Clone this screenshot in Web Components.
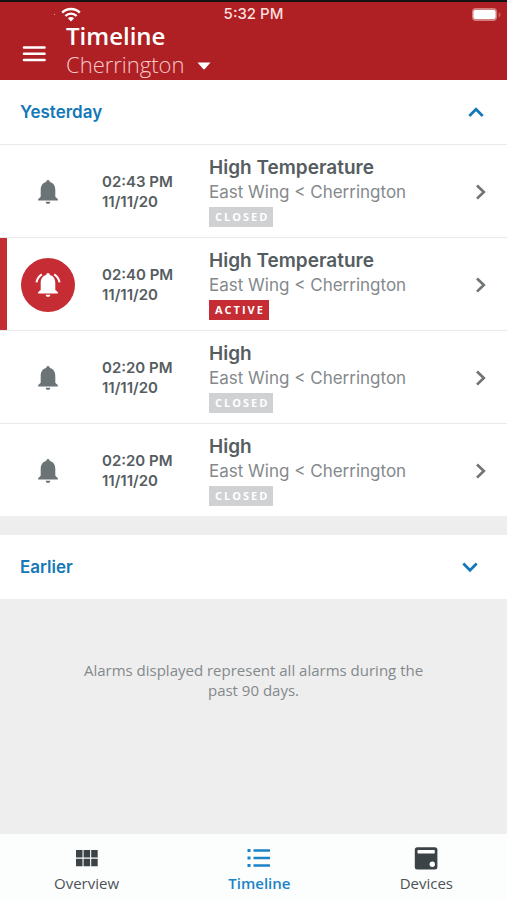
<!DOCTYPE html>
<html lang="en">
<head>
<meta charset="utf-8">
<meta name="viewport" content="width=device-width, initial-scale=1">
<title>Timeline</title>
<style>
  html, body { margin: 0; }
  body {
    --red: #af2024;
    --alert: #c52c33;
    --blue: #1478b8;
    --ink: #555d61;
    --muted: #84898c;
    --line: #e9eaeb;
    --ui: Inter, "Liberation Sans", sans-serif;
    --brand: "Open Sans", "Noto Sans", sans-serif;
    font-family: var(--ui);
    color: var(--ink);
    background: #eee;
  }
</style>
</head>
<body>
<timeline-app></timeline-app>

<script>
const define = (name, html, setup) => {
  const template = document.createElement('template');
  template.innerHTML = html;
  customElements.define(name, class extends HTMLElement {
    connectedCallback() {
      if (this.shadowRoot) return;
      this.attachShadow({ mode: 'open' }).append(template.content.cloneNode(true));
      if (setup) setup(this, this.shadowRoot);
    }
  });
};

const icons = {
  wifi: [20, 15, '<g fill="none" stroke="#fff" stroke-width="2.4"><path d="M1.2 5.6a12.4 12.4 0 0 1 17.6 0"/><path d="M4.4 9a7.9 7.9 0 0 1 11.2 0"/></g><path fill="#fff" d="M6.9 11.2a4.4 4.4 0 0 1 6.2 0L10 14.4z"/>'],
  battery: [30, 15, '<rect x="1" y="1" width="25" height="13" rx="4" fill="#d67f80"/><rect x="2.5" y="3" width="22" height="9" rx="2" fill="#fff"/><path fill="#c9595c" d="M27.500 5.200v5q2.200-.8 2.200-2.500t-2.200-2.500z"/>'],
  menu: [24, 18, '<path stroke="#fff" stroke-width="2.600" stroke-linecap="round" d="M2 2.500h20.500M2 8.700h20.500M2 15h20.500"/>'],
  caret: [14, 8, '<path fill="#fff" d="M.5.500h13L7.800 7q-.8.800-1.600 0z"/>'],
  up: [16, 16, '<path fill="none" stroke="currentColor" stroke-width="2.700" d="M1.300 12 8 5.200l6.700 6.800"/>'],
  down: [16, 16, '<path fill="none" stroke="currentColor" stroke-width="2.700" d="M1.300 4.500 8 11.300l6.700-6.800"/>'],
  right: [12, 18, '<path fill="none" stroke="#717578" stroke-width="2.700" d="M2 2.500 8.800 9 2 15.600"/>'],
  bell: [28, 28, '<path fill="#6b7377" d="M14 2q1.700 0 1.900 1.900C20 5 21.300 8.500 21.300 12v6.700l2.600 2.600v1.300H4.100v-1.300l2.600-2.600V12c0-3.500 1.300-7 5.400-8.100Q12.300 2 14 2zM11.600 23.800h4.800Q16 26 14 26t-2.400-2.200z"/>'],
  ring: [28, 28, '<path fill="#fff" d="M14 2q1.700 0 1.900 1.900C20 5 21.300 8.500 21.300 12v6.700l2.600 2.600v1.300H4.100v-1.300l2.600-2.600V12c0-3.500 1.300-7 5.400-8.100Q12.300 2 14 2zM11.600 23.800h4.800Q16 26 14 26t-2.400-2.200z"/><g fill="none" stroke="#fff" stroke-width="2"><path d="M7.800 3.300Q3.200 6.200 2.600 11.300M20.200 3.300q4.600 2.900 5.200 8"/></g>'],
  grid: [24, 24, '<path fill="#3b4347" d="M1 4h6.500v7.500H1zM8.600 4h6.500v7.500H8.600zM16.200 4h6.500v7.500h-6.500zM1 12.700h6.500v7.500H1zM8.600 12.700h6.500v7.500H8.600zM16.200 12.700h6.500v7.500h-6.500z"/>'],
  list: [24, 24, '<path fill="currentColor" d="M.5 3h3v3h-3zM6.500 3.200H23v2.500H6.500zM.5 10.500h3v3h-3zM6.500 10.800H23v2.500H6.500zM.5 18h3v3h-3zM6.500 18.300H23v2.500H6.500z"/>'],
  device: [24, 24, '<rect x=".8" y="1.300" width="22.600" height="22.200" rx="2.500" fill="#3b4347"/><rect x="3.500" y="4" width="17.300" height="3.500" rx=".7" fill="#fff"/><circle cx="18.300" cy="18.200" r="2.700" fill="#fff"/>']
};

define('app-icon', `
  <style>:host { display: block; flex: none; line-height: 0; } svg { display: block; }</style>
`, (host, root) => {
  const [w, h, shapes] = icons[host.getAttribute('name')];
  root.innerHTML += `<svg width="${w}" height="${h}" viewBox="0 0 ${w} ${h}" aria-hidden="true">${shapes}</svg>`;
});

define('status-bar', `
  <style>
    :host { display: grid; grid-template-columns: 1fr auto 1fr; align-items: center; height: 24px;
      padding: 2px 6px 0 6px; border-top: 2px solid #151213; box-sizing: border-box; color: #fbdedd; }
    .left { display: flex; align-items: center; gap: 6px; padding-left: 48px; }
    .dot { width: 1px; height: 1px; background: #e9a5a5; }
    time { font: 500 15px/20px var(--ui); }
    app-icon.battery { justify-self: end; }
  </style>
  <span class="left"><span class="dot"></span><app-icon name="wifi"></app-icon></span>
  <time>5:32 PM</time>
  <app-icon class="battery" name="battery"></app-icon>
`);

define('app-header', `
  <style>
    :host { display: block; background: var(--red); color: #fff; }
    .bar { display: flex; align-items: center; gap: 20px; padding: 0 22px 4px; height: 56px; box-sizing: border-box; }
    button { border: 0; padding: 0; background: none; color: inherit; cursor: pointer; }
    .menu { margin-top: 8px; }
    h1 { margin: 0; font: 600 24px/28px var(--brand); }
    .site { display: flex; align-items: center; gap: 12px; font: 300 22px/28px var(--brand); color: #f6c9c6; }
    .site app-icon { padding-top: 4px; }
  </style>
  <status-bar></status-bar>
  <div class="bar">
    <button class="menu" aria-label="Menu"><app-icon name="menu"></app-icon></button>
    <div>
      <h1><slot name="title"></slot></h1>
      <button class="site"><slot name="site"></slot><app-icon name="caret"></app-icon></button>
    </div>
  </div>
`);

define('alarm-section', `
  <style>
    :host { display: block; background: #fff; }
    h2 { margin: 0; }
    button { display: flex; justify-content: space-between; align-items: center; width: 100%; height: 64px;
      border: 0; padding: 0 23px 0 20px; background: none; color: var(--blue); font: 600 17px/24px var(--ui); cursor: pointer; }
    :host(:not([open])) button { padding-right: 29px; }
    :host(:not([open])) .rows { display: none; }
  </style>
  <h2><button><span class="label"></span></button></h2>
  <div class="rows"><slot></slot></div>
`, (host, root) => {
  const open = host.hasAttribute('open');
  const button = root.querySelector('button');
  root.querySelector('.label').textContent = host.getAttribute('label');
  button.setAttribute('aria-expanded', open);
  const icon = document.createElement('app-icon');
  icon.setAttribute('name', open ? 'up' : 'down');
  button.append(icon);
});

define('alarm-row', `
  <style>
    :host { display: grid; grid-template-columns: 95px 107px 1fr auto; align-items: center; height: 93px;
      box-sizing: border-box; border-top: 1px solid var(--line); padding: 1px 20px 0 0; }
    :host([active]) { background: linear-gradient(var(--alert), var(--alert)) left / 7px 100% no-repeat; }
    .mark { display: grid; place-items: center; width: 54px; height: 54px; border-radius: 50%; justify-self: center; }
    :host([active]) .mark { background: var(--alert); }
    .when { padding-left: 7px; font: 600 15px/20px var(--ui); }
    .what { padding-left: 7px; }
    h3 { margin: 0; font: 600 19px/24px var(--ui); }
    p { margin: 0; font: 400 17px/24px var(--ui); color: var(--muted); }
    .badge { display: block; width: max-content; margin-top: 3px; padding: 0 4px 0 6px; background: #cfd1d3; color: #fff;
      font: 700 11px/20px var(--brand); letter-spacing: 2px; }
    :host([active]) .badge { background: var(--alert); }
    button { border: 0; padding: 0; background: none; cursor: pointer; }
  </style>
  <span class="mark"></span>
  <time class="when"><slot name="time"></slot><br><slot name="date"></slot></time>
  <div class="what">
    <h3><slot name="title"></slot></h3>
    <p><slot name="place"></slot></p>
    <span class="badge"><slot name="state"></slot></span>
  </div>
  <button aria-label="Open alarm"><app-icon name="right"></app-icon></button>
`, (host, root) => {
  const icon = document.createElement('app-icon');
  icon.setAttribute('name', host.hasAttribute('active') ? 'ring' : 'bell');
  root.querySelector('.mark').append(icon);
});

define('tab-item', `
  <style>
    :host { display: block; }
    a { display: flex; flex-direction: column; align-items: center; gap: 2px; color: #4c5356; text-decoration: none;
      font: 500 15px/22px var(--brand); }
    :host([current]) a { color: #1b83c6; font-weight: 600; }
  </style>
  <a href="#"><slot name="icon"></slot><span><slot></slot></span></a>
`, (host, root) => {
  if (host.hasAttribute('current')) root.querySelector('a').setAttribute('aria-current', 'page');
});

define('tab-bar', `
  <style>
    :host { display: block; background: #fcfefe; }
    nav { display: flex; justify-content: space-between; padding: 12px 54px 6px; }
  </style>
  <nav><slot></slot></nav>
`);

define('timeline-app', `
  <style>
    :host { display: flex; flex-direction: column; min-height: 100vh; }
    main { flex: 1; display: flex; flex-direction: column; gap: 19px; }
    .note { margin: 42px auto 0; max-width: 350px; text-align: center; font: 400 15px/20px var(--brand); color: var(--muted); }
  </style>
  <app-header><span slot="title">Timeline</span><span slot="site">Cherrington</span></app-header>
  <main>
    <alarm-section label="Yesterday" open>
      <alarm-row><span slot="time">02:43 PM</span><span slot="date">11/11/20</span><span slot="title">High Temperature</span><span slot="place">East Wing &lt; Cherrington</span><span slot="state">CLOSED</span></alarm-row>
      <alarm-row active><span slot="time">02:40 PM</span><span slot="date">11/11/20</span><span slot="title">High Temperature</span><span slot="place">East Wing &lt; Cherrington</span><span slot="state">ACTIVE</span></alarm-row>
      <alarm-row><span slot="time">02:20 PM</span><span slot="date">11/11/20</span><span slot="title">High</span><span slot="place">East Wing &lt; Cherrington</span><span slot="state">CLOSED</span></alarm-row>
      <alarm-row><span slot="time">02:20 PM</span><span slot="date">11/11/20</span><span slot="title">High</span><span slot="place">East Wing &lt; Cherrington</span><span slot="state">CLOSED</span></alarm-row>
    </alarm-section>
    <alarm-section label="Earlier"></alarm-section>
    <p class="note">Alarms displayed represent all alarms during the past 90 days.</p>
  </main>
  <tab-bar>
    <tab-item><app-icon slot="icon" name="grid"></app-icon>Overview</tab-item>
    <tab-item current><app-icon slot="icon" name="list"></app-icon>Timeline</tab-item>
    <tab-item><app-icon slot="icon" name="device"></app-icon>Devices</tab-item>
  </tab-bar>
`);
</script>
</body>
</html>
